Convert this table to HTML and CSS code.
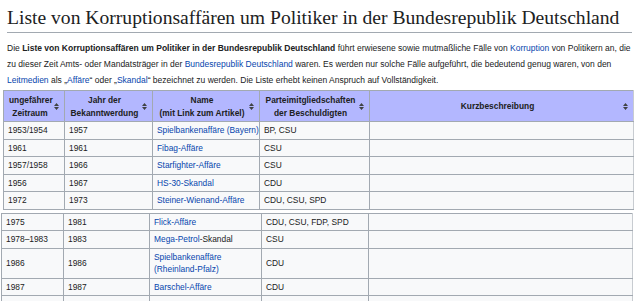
FILE: index.html
```html
<!DOCTYPE html>
<html lang="de">
<head>
<meta charset="utf-8">
<title>Liste von Korruptionsaffären</title>
<link rel="stylesheet" href="styles.css">
</head>
<body>
<div class="page">
  <h1 class="title">Liste von Korruptionsaffären um Politiker in der Bundesrepublik Deutschland</h1>
  <p class="intro">Die <b>Liste von Korruptionsaffären um Politiker in der Bundesrepublik Deutschland</b> führt erwiesene sowie mutmaßliche Fälle von <a href="#">Korruption</a> von Politikern an, die zu dieser Zeit Amts- oder Mandatsträger in der <a href="#">Bundesrepublik Deutschland</a> waren. Es werden nur solche Fälle aufgeführt, die bedeutend genug waren, von den <a href="#">Leitmedien</a> als „<a href="#">Affäre</a>“ oder „<a href="#">Skandal</a>“ bezeichnet zu werden. Die Liste erhebt keinen Anspruch auf Vollständigkeit.</p>

  <table class="wt wt-top">
    <colgroup>
      <col class="c1a"><col class="c2a"><col class="c3a"><col class="c4a"><col>
    </colgroup>
    <thead>
      <tr>
        <th><span class="hl">ungefährer<br>Zeitraum</span><svg class="sort" width="5" height="7" viewBox="0 0 5 7"><path d="M2.5 0 L5 3 L0 3 Z M0 4 L5 4 L2.5 7 Z"/></svg></th>
        <th><span class="hl">Jahr der<br>Bekanntwerdung</span><svg class="sort" width="5" height="7" viewBox="0 0 5 7"><path d="M2.5 0 L5 3 L0 3 Z M0 4 L5 4 L2.5 7 Z"/></svg></th>
        <th><span class="hl">Name<br>(mit Link zum Artikel)</span><svg class="sort" width="5" height="7" viewBox="0 0 5 7"><path d="M2.5 0 L5 3 L0 3 Z M0 4 L5 4 L2.5 7 Z"/></svg></th>
        <th><span class="hl">Parteimitgliedschaften<br>der Beschuldigten</span><svg class="sort" width="5" height="7" viewBox="0 0 5 7"><path d="M2.5 0 L5 3 L0 3 Z M0 4 L5 4 L2.5 7 Z"/></svg></th>
        <th><span class="hl">Kurzbeschreibung</span><svg class="sort" width="5" height="7" viewBox="0 0 5 7"><path d="M2.5 0 L5 3 L0 3 Z M0 4 L5 4 L2.5 7 Z"/></svg></th>
      </tr>
    </thead>
    <tbody>
      <tr><td>1953/1954</td><td>1957</td><td><a href="#">Spielbankenaffäre (Bayern)</a></td><td>BP, CSU</td><td></td></tr>
      <tr><td>1961</td><td>1961</td><td><a href="#">Fibag-Affäre</a></td><td>CSU</td><td></td></tr>
      <tr><td>1957/1958</td><td>1966</td><td><a href="#">Starfighter-Affäre</a></td><td>CSU</td><td></td></tr>
      <tr><td>1956</td><td>1967</td><td><a href="#">HS-30-Skandal</a></td><td>CDU</td><td></td></tr>
      <tr><td>1972</td><td>1973</td><td><a href="#">Steiner-Wienand-Affäre</a></td><td>CDU, CSU, SPD</td><td></td></tr>
    </tbody>
  </table>

  <table class="wt wt-bottom">
    <colgroup>
      <col class="c1b"><col class="c2b"><col class="c3b"><col class="c4b"><col>
    </colgroup>
    <tbody>
      <tr><td>1975</td><td>1981</td><td><a href="#">Flick-Affäre</a></td><td>CDU, CSU, FDP, SPD</td><td></td></tr>
      <tr><td>1978–1983</td><td>1983</td><td><a href="#">Mega-Petrol</a>-Skandal</td><td>CSU</td><td></td></tr>
      <tr><td>1986</td><td>1986</td><td><a href="#">Spielbankenaffäre<br>(Rheinland-Pfalz)</a></td><td>CDU</td><td></td></tr>
      <tr><td>1987</td><td>1987</td><td><a href="#">Barschel-Affäre</a></td><td>CDU</td><td></td></tr>
      <tr class="cut"><td></td><td></td><td></td><td></td><td></td></tr>
    </tbody>
  </table>
</div>
</body>
</html>
```
FILE: styles.css
```css
html, body {
  margin: 0;
  padding: 0;
  background: #ffffff;
}
.page {
  color: #202122;
  font-family: "Liberation Sans", Arial, sans-serif;
  overflow: hidden;
  height: 301px;
}
.title {
  margin: 0 8px 0 7px;
  padding: 7px 0 3px 0;
  font-family: "Liberation Serif", "Times New Roman", serif;
  font-weight: normal;
  font-size: 19.6px;
  line-height: 22px;
  border-bottom: 1px solid #a2a9b1;
  white-space: nowrap;
}
.intro {
  margin: 7px 8px 0 7px;
  font-size: 8.5px;
  line-height: 16px;
}
.intro a, .wt a {
  color: #0645ad;
  text-decoration: none;
}
.wt {
  table-layout: fixed;
  border-collapse: collapse;
  background: #f8f9fa;
  font-size: 8.4px;
  line-height: 12.5px;
  color: #202122;
}
.wt-top {
  margin: 2px 0 0 3px;
  width: 631px;
}
.wt-bottom {
  margin: 3px 0 0 1px;
  width: 632px;
}
.wt td, .wt th {
  border: 1px solid #a2a9b1;
  padding: 2px 4px;
  text-align: left;
  vertical-align: middle;
  white-space: nowrap;
  overflow: hidden;
}
.wt th {
  background: #b3b7ff;
  font-weight: bold;
  text-align: center;
  position: relative;
  padding: 3px 13px 2px 5px;
}
.wt td:last-child, .wt th:last-child {
  border-right-color: #c8ccd1;
}
.cut td {
  height: 13px;
}
.sort {
  position: absolute;
  right: 5px;
  top: 50%;
  margin-top: -3px;
  fill: #404244;
}
.c1a { width: 61px; }
.c2a { width: 88px; }
.c3a { width: 107px; }
.c4a { width: 110px; }
.c1b { width: 62px; }
.c2b { width: 86px; }
.c3b { width: 112px; }
.c4b { width: 107px; }
```
